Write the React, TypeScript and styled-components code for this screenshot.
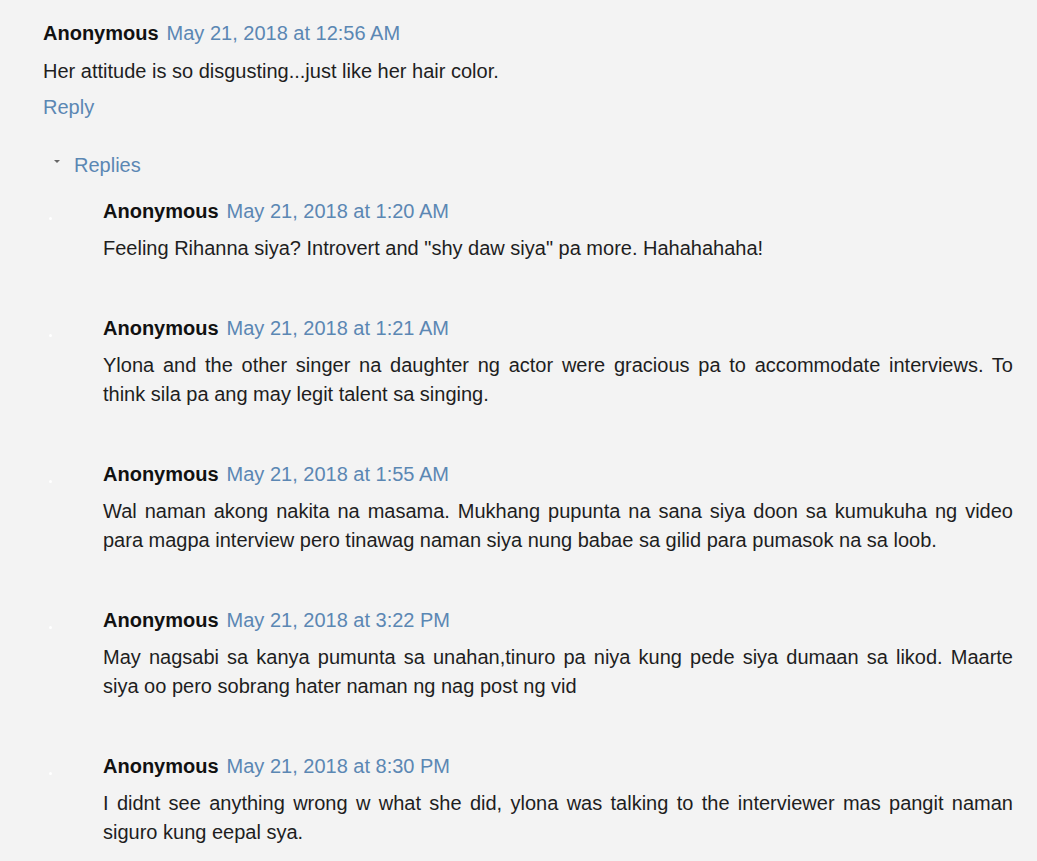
import React from 'react';
import styled, { createGlobalStyle } from 'styled-components';

const GlobalStyle = createGlobalStyle`
  body {
    margin: 0;
    background: #f3f3f3;
    font-family: "Liberation Sans", Arial, sans-serif;
    color: #1e1e1e;
  }
`;

const Page = styled.div`
  padding: 19px 24px 0 43px;
  font-size: 20px;
`;

const Header = styled.div`
  line-height: 29px;
  white-space: nowrap;
`;

const Author = styled.span`
  font-weight: bold;
  color: #111;
`;

const Stamp = styled.a`
  color: #5b87b3;
  text-decoration: none;
  margin-left: 8px;
`;

const Body = styled.p<{ $reply?: boolean }>`
  margin: ${p => (p.$reply ? '8px 0 51px' : '9px 0 0')};
  line-height: 29px;
  text-align: justify;
`;

const Action = styled.a`
  display: block;
  margin-top: 7px;
  line-height: 29px;
  color: #5b87b3;
  text-decoration: none;
`;

const Toggle = styled.div`
  display: flex;
  align-items: center;
  margin-top: 29px;
  padding-left: 11px;
  line-height: 29px;
  color: #5b87b3;
`;

const Caret = styled.span`
  width: 0;
  height: 0;
  border-left: 3px solid transparent;
  border-right: 3px solid transparent;
  border-top: 3px solid #666;
  margin: -8px 14px 0 0;
`;

const Thread = styled.div`
  margin-top: 17px;
`;

const ReplyItem = styled.div`
  display: grid;
  grid-template-columns: 60px 1fr;

  &:last-child p {
    margin-bottom: 10px;
  }
`;

const Avatar = styled.span`
  width: 3px;
  height: 3px;
  border-radius: 50%;
  background: #fff;
  margin: 20px 0 0 6px;
`;

const replies = [
  {
    time: 'May 21, 2018 at 1:20 AM',
    text: 'Feeling Rihanna siya? Introvert and "shy daw siya" pa more. Hahahahaha!',
  },
  {
    time: 'May 21, 2018 at 1:21 AM',
    text: 'Ylona and the other singer na daughter ng actor were gracious pa to accommodate interviews. To think sila pa ang may legit talent sa singing.',
  },
  {
    time: 'May 21, 2018 at 1:55 AM',
    text: 'Wal naman akong nakita na masama. Mukhang pupunta na sana siya doon sa kumukuha ng video para magpa interview pero tinawag naman siya nung babae sa gilid para pumasok na sa loob.',
  },
  {
    time: 'May 21, 2018 at 3:22 PM',
    text: 'May nagsabi sa kanya pumunta sa unahan,tinuro pa niya kung pede siya dumaan sa likod. Maarte siya oo pero sobrang hater naman ng nag post ng vid',
  },
  {
    time: 'May 21, 2018 at 8:30 PM',
    text: 'I didnt see anything wrong w what she did, ylona was talking to the interviewer mas pangit naman siguro kung eepal sya.',
  },
];

export default function App() {
  return (
    <Page>
      <GlobalStyle />
      <Header>
        <Author>Anonymous</Author>
        <Stamp href="#">May 21, 2018 at 12:56 AM</Stamp>
      </Header>
      <Body>Her attitude is so disgusting...just like her hair color.</Body>
      <Action href="#">Reply</Action>
      <Toggle>
        <Caret />
        Replies
      </Toggle>
      <Thread>
        {replies.map((r, i) => (
          <ReplyItem key={i}>
            <Avatar />
            <div>
              <Header>
                <Author>Anonymous</Author>
                <Stamp href="#">{r.time}</Stamp>
              </Header>
              <Body $reply>{r.text}</Body>
            </div>
          </ReplyItem>
        ))}
      </Thread>
    </Page>
  );
}
